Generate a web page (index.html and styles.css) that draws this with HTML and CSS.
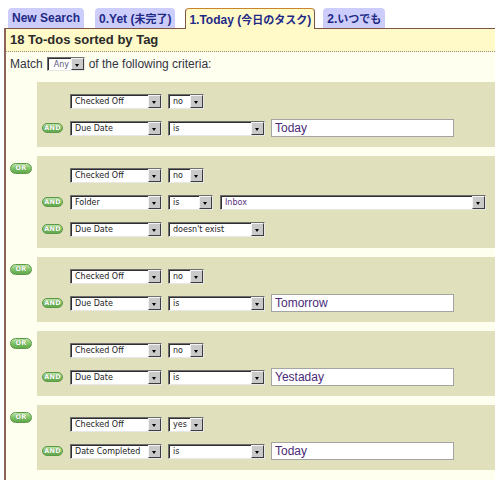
FILE: index.html
```html
<!DOCTYPE html>
<html>
<head>
<meta charset="utf-8">
<link rel="stylesheet" href="styles.css">
</head>
<body>
<div class="tabs">
  <span class="tab">New Search</span>
  <span class="tab">0.Yet (<span class="cjk">未完了</span>)</span>
  <span class="tab active">1.Today (<span class="cjk">今日のタスク</span>)</span>
  <span class="tab">2.<span class="cjk">いつでも</span></span>
</div>
<div class="panel">
  <div class="panel-head">18 To-dos sorted by Tag</div>
  <div class="match">
    <span>Match</span>
    <span class="sel sel-any"><span class="val">Any</span><span class="btn"></span></span>
    <span>of the following criteria:</span>
  </div>
  <div class="groups">
    <div class="grp-row">
      <div class="or-slot"></div>
      <div class="grp">
        <div class="row"><span class="pill-slot"></span><span class="sel w-field"><span class="val">Checked Off</span><span class="btn"></span></span><span class="sel w-yn"><span class="val">no</span><span class="btn"></span></span></div>
        <div class="row"><span class="pill-slot"><span class="pill and">AND</span></span><span class="sel w-field"><span class="val">Due Date</span><span class="btn"></span></span><span class="sel w-op"><span class="val">is</span><span class="btn"></span></span><span class="inp">Today</span></div>
      </div>
    </div>
    <div class="grp-row">
      <div class="or-slot"><span class="pill or">OR</span></div>
      <div class="grp">
        <div class="row"><span class="pill-slot"></span><span class="sel w-field"><span class="val">Checked Off</span><span class="btn"></span></span><span class="sel w-yn"><span class="val">no</span><span class="btn"></span></span></div>
        <div class="row"><span class="pill-slot"><span class="pill and">AND</span></span><span class="sel w-field"><span class="val">Folder</span><span class="btn"></span></span><span class="sel w-is"><span class="val">is</span><span class="btn"></span></span><span class="sel w-folder"><span class="val folder">Inbox</span><span class="btn"></span></span></div>
        <div class="row"><span class="pill-slot"><span class="pill and">AND</span></span><span class="sel w-field"><span class="val">Due Date</span><span class="btn"></span></span><span class="sel w-op"><span class="val">doesn't exist</span><span class="btn"></span></span></div>
      </div>
    </div>
    <div class="grp-row">
      <div class="or-slot"><span class="pill or">OR</span></div>
      <div class="grp">
        <div class="row"><span class="pill-slot"></span><span class="sel w-field"><span class="val">Checked Off</span><span class="btn"></span></span><span class="sel w-yn"><span class="val">no</span><span class="btn"></span></span></div>
        <div class="row"><span class="pill-slot"><span class="pill and">AND</span></span><span class="sel w-field"><span class="val">Due Date</span><span class="btn"></span></span><span class="sel w-op"><span class="val">is</span><span class="btn"></span></span><span class="inp">Tomorrow</span></div>
      </div>
    </div>
    <div class="grp-row">
      <div class="or-slot"><span class="pill or">OR</span></div>
      <div class="grp">
        <div class="row"><span class="pill-slot"></span><span class="sel w-field"><span class="val">Checked Off</span><span class="btn"></span></span><span class="sel w-yn"><span class="val">no</span><span class="btn"></span></span></div>
        <div class="row"><span class="pill-slot"><span class="pill and">AND</span></span><span class="sel w-field"><span class="val">Due Date</span><span class="btn"></span></span><span class="sel w-op"><span class="val">is</span><span class="btn"></span></span><span class="inp">Yestaday</span></div>
      </div>
    </div>
    <div class="grp-row">
      <div class="or-slot"><span class="pill or">OR</span></div>
      <div class="grp">
        <div class="row"><span class="pill-slot"></span><span class="sel w-field"><span class="val">Checked Off</span><span class="btn"></span></span><span class="sel w-yn"><span class="val">yes</span><span class="btn"></span></span></div>
        <div class="row"><span class="pill-slot"><span class="pill and">AND</span></span><span class="sel w-field"><span class="val">Date Completed</span><span class="btn"></span></span><span class="sel w-op"><span class="val">is</span><span class="btn"></span></span><span class="inp">Today</span></div>
      </div>
    </div>
  </div>
</div>
</body>
</html>
```
FILE: styles.css
```css
html, body {
  margin: 0;
  padding: 0;
  background: #ffffff;
  overflow: hidden;
}
body {
  width: 495px;
  height: 480px;
  padding: 8px 0 0 4px;
  box-sizing: border-box;
  font-family: "Liberation Sans", Arial, "Noto Sans CJK JP", sans-serif;
}
.tabs {
  display: flex;
  align-items: flex-end;
  height: 20px;
  padding-left: 4px;
  position: relative;
  z-index: 2;
}
.tab {
  height: 20px;
  box-sizing: border-box;
  padding: 0 4px;
  margin-right: 11px;
  background: #cdcdfb;
  border-radius: 4px 4px 0 0;
  color: #1f2a86;
  font-weight: bold;
  font-size: 12px;
  line-height: 21px;
  white-space: nowrap;
}
.cjk {
  font-family: "Noto Sans CJK JP", sans-serif;
  font-size: 11px;
}
.tab:nth-child(2) { margin-right: 10px; }
.tab.active {
  height: 21px;
  margin-bottom: -1px;
  background: #fffac8;
  border: 1px solid #7c5446;
  border-bottom: none;
  border-top-color: #c8862c;
  padding: 0 3px;
  margin-right: 8px;
  line-height: 20px;
}
.panel {
  border-top: 1px solid #7c5446;
  border-left: 2px solid #8a6458;
  background: #fffff0;
  height: 460px;
}
.panel-head {
  height: 22px;
  background: #fffac8;
  border-bottom: 1px dotted #9a8a80;
  font-weight: bold;
  font-size: 13px;
  color: #2a2a2a;
  line-height: 22px;
  padding-left: 4px;
}
.match {
  height: 24px;
  display: flex;
  align-items: center;
  padding-left: 4px;
  font-size: 12px;
  color: #333344;
  gap: 4px;
}
.groups {
  padding-top: 6px;
  display: flex;
  flex-direction: column;
  gap: 9px;
}
.grp-row {
  display: flex;
}
.or-slot {
  width: 31px;
  flex: none;
}
.grp {
  flex: 1;
  background: #e1e0bd;
  padding: 10px 0 10px 5px;
  display: flex;
  flex-direction: column;
  gap: 9px;
}
.row {
  height: 18px;
  display: flex;
  align-items: center;
  gap: 6px;
}
.pill-slot {
  width: 21px;
  margin-right: 1px;
  display: flex;
  flex: none;
}
.pill {
  display: inline-flex;
  align-items: center;
  justify-content: center;
  box-sizing: border-box;
  border-radius: 6px;
  border: 1px solid #5b9848;
  background: linear-gradient(#bfe6a8, #7cc063 55%, #62a84c);
  color: #ffffff;
  font-family: "DejaVu Sans", Verdana, sans-serif;
  font-weight: bold;
  font-size: 6.5px;
  letter-spacing: 0.2px;
  text-shadow: 0 0 1px #3d7a2c;
}
.pill.and {
  width: 21px;
  height: 10px;
}
.pill.or {
  width: 22px;
  height: 11px;
  margin: 5px 0 0 4px;
}
.sel {
  display: inline-flex;
  box-sizing: border-box;
  height: 15px;
  background: #ffffff;
  border: 1px solid;
  border-color: #6e6e6e #e8e8e8 #e8e8e8 #6e6e6e;
  box-shadow: inset 1px 1px 0 #2e2e2e;
  flex: none;
}
.sel .val {
  flex: 1;
  padding-left: 4px;
  padding-top: 1px;
  font-family: "DejaVu Sans", Verdana, sans-serif;
  font-size: 8px;
  line-height: 12px;
  color: #222222;
  white-space: nowrap;
  overflow: hidden;
}
.sel .val.folder {
  color: #5a2f7e;
}
.sel .btn {
  width: 13px;
  flex: none;
  box-sizing: border-box;
  background: #c9c9c9;
  border: 1px solid;
  border-color: #f4f4f4 #3c3c3c #3c3c3c #f4f4f4;
  position: relative;
}
.sel .btn::after {
  content: "";
  position: absolute;
  left: 3px;
  top: 5px;
  border-left: 2.5px solid transparent;
  border-right: 2.5px solid transparent;
  border-top: 3px solid #000000;
}
.sel-any {
  width: 38px;
  height: 14px;
}
.sel-any .val {
  color: #5a5a7a;
  padding-left: 6px;
  line-height: 11px;
}
.w-field { width: 92px; }
.w-yn { width: 36px; }
.w-op { width: 97px; }
.w-is { width: 45px; }
.w-folder { width: 266px; margin-left: 1px; }
.inp {
  box-sizing: border-box;
  width: 183px;
  height: 18px;
  border: 1px solid #a4a4a4;
  background: #ffffff;
  font-family: "Liberation Sans", Arial, sans-serif;
  font-size: 12px;
  line-height: 16px;
  color: #4a2a78;
  padding-left: 3px;
  flex: none;
}
```
